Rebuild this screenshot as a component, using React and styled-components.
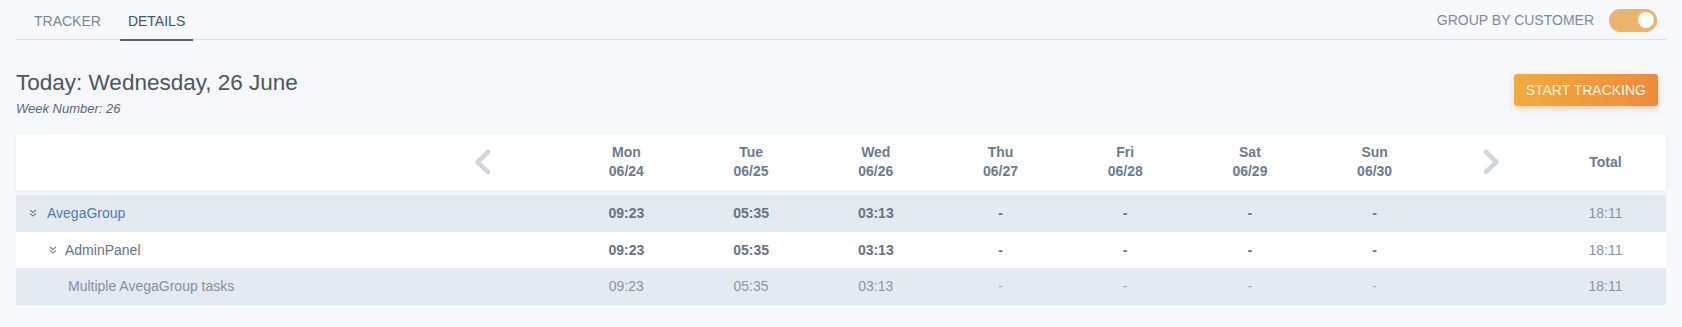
import React from "react";
import styled, { createGlobalStyle } from "styled-components";

const GlobalStyle = createGlobalStyle`
  body {
    margin: 0;
    background: #f6f8fb;
    font-family: "Liberation Sans", Arial, sans-serif;
  }
`;

const Page = styled.div`
  padding: 0 16px;
`;

const TopBar = styled.div`
  box-sizing: border-box;
  height: 40px;
  display: flex;
  justify-content: space-between;
  align-items: center;
  border-bottom: 1px solid #dde1e7;
`;

const Tabs = styled.div`
  display: flex;
  gap: 11px;
  padding-left: 10px;
  align-self: flex-start;
`;

const Tab = styled.div`
  box-sizing: border-box;
  height: 41px;
  padding: 2px 8px 0;
  display: flex;
  align-items: center;
  font-size: 14px;
  color: ${(p) => (p.active ? "#4a5562" : "#7d8896")};
  border-bottom: 2px solid ${(p) => (p.active ? "#55606e" : "transparent")};
`;

const GroupSwitch = styled.div`
  display: flex;
  align-items: center;
  gap: 15px;
  padding-right: 9px;
  font-size: 14px;
  color: #7f8a9b;
`;

const Toggle = styled.div`
  box-sizing: border-box;
  width: 48px;
  height: 23px;
  border-radius: 12px;
  background: #ebb36b;
  display: flex;
  justify-content: flex-end;
  align-items: center;
  padding-right: 3px;
  margin-top: 1px;
`;

const Knob = styled.div`
  width: 16px;
  height: 16px;
  border-radius: 50%;
  background: #fff;
`;

const HeadSection = styled.div`
  display: flex;
  justify-content: space-between;
  align-items: flex-start;
  padding: 30px 8px 18px 0;
`;

const Title = styled.h1`
  margin: 0;
  font-size: 22.5px;
  line-height: 26px;
  font-weight: normal;
  color: #4a5663;
`;

const WeekNumber = styled.div`
  margin-top: 5px;
  font-size: 13px;
  font-style: italic;
  color: #5d6875;
`;

const StartButton = styled.button`
  margin-top: 4px;
  height: 32px;
  padding: 0 12px;
  border: none;
  border-radius: 3px;
  background: linear-gradient(to right, #f4aa3c, #f08a3b);
  box-shadow: 0 3px 6px rgba(240, 140, 60, 0.3);
  color: #fff8ee;
  font-family: inherit;
  font-size: 14px;
`;

const Grid = styled.div`
  display: grid;
  grid-template-columns: 384px 164px repeat(7, 1fr) 108px 121px;
  align-items: center;
`;

const HeaderRow = styled(Grid)`
  height: 56px;
  background: #fff;
  box-shadow: 0 2px 4px rgba(30, 50, 80, 0.05);
  margin-bottom: 5px;
`;

const DayHead = styled.div`
  text-align: center;
  font-size: 14px;
  font-weight: bold;
  line-height: 19px;
  color: #6e7b8c;
`;

const ArrowCell = styled.div`
  display: flex;
  justify-content: center;
`;

const Row = styled(Grid)`
  height: 36.5px;
  background: ${(p) => (p.striped ? "#e4eaf2" : "#fff")};
`;

const NameCell = styled.div`
  grid-column: span 2;
  display: flex;
  align-items: center;
  gap: ${(p) => (p.level === 1 ? 10 : 8)}px;
  padding-left: ${(p) => [13, 33, 52][p.level - 1]}px;
  font-size: 14px;
  color: ${(p) => ["#4c7bbb", "#6a7585", "#8690a0"][p.level - 1]};
`;

const ValueCell = styled.div`
  text-align: center;
  font-size: 14px;
  font-weight: ${(p) => (p.bold ? "bold" : "normal")};
  color: ${(p) => (p.bold ? "#6a7383" : p.empty ? "#a6afbb" : "#8c96a4")};
`;

const TotalCell = styled.div`
  grid-column: 11;
  text-align: center;
  font-size: 14px;
  color: #8a93a2;
`;

const ExpandIcon = () => (
  <svg width="8" height="8" viewBox="0 0 8 8">
    <path
      d="M1 1 L4 3.5 L7 1 M1 4.5 L4 7 L7 4.5"
      fill="none"
      stroke="#7d8896"
      strokeWidth="1.2"
    />
  </svg>
);

const Chevron = ({ right }) => (
  <svg
    width="17"
    height="26"
    viewBox="0 0 17 26"
    style={right ? { transform: "scaleX(-1)" } : undefined}
  >
    <path
      d="M14 3 L3.5 13 L14 23"
      fill="none"
      stroke="#cfd6e0"
      strokeWidth="4.5"
      strokeLinecap="round"
      strokeLinejoin="round"
    />
  </svg>
);

const days = [
  ["Mon", "06/24"],
  ["Tue", "06/25"],
  ["Wed", "06/26"],
  ["Thu", "06/27"],
  ["Fri", "06/28"],
  ["Sat", "06/29"],
  ["Sun", "06/30"],
];

const values = ["09:23", "05:35", "03:13", "-", "-", "-", "-"];

const rows = [
  { name: "AvegaGroup", level: 1, bold: true, striped: true },
  { name: "AdminPanel", level: 2, bold: true, striped: false },
  { name: "Multiple AvegaGroup tasks", level: 3, bold: false, striped: true },
];

const App = () => (
  <React.Fragment>
    <GlobalStyle />
    <Page>
      <TopBar>
        <Tabs>
          <Tab>TRACKER</Tab>
          <Tab active>DETAILS</Tab>
        </Tabs>
        <GroupSwitch>
          GROUP BY CUSTOMER
          <Toggle>
            <Knob />
          </Toggle>
        </GroupSwitch>
      </TopBar>

      <HeadSection>
        <div>
          <Title>Today: Wednesday, 26 June</Title>
          <WeekNumber>Week Number: 26</WeekNumber>
        </div>
        <StartButton>START TRACKING</StartButton>
      </HeadSection>

      <HeaderRow>
        <div />
        <ArrowCell>
          <Chevron />
        </ArrowCell>
        {days.map(([d, date]) => (
          <DayHead key={d}>
            {d}
            <br />
            {date}
          </DayHead>
        ))}
        <ArrowCell>
          <Chevron right />
        </ArrowCell>
        <DayHead>Total</DayHead>
      </HeaderRow>

      {rows.map((r) => (
        <Row key={r.name} striped={r.striped}>
          <NameCell level={r.level}>
            {r.level < 3 && <ExpandIcon />}
            {r.name}
          </NameCell>
          {values.map((v, i) => (
            <ValueCell key={i} bold={r.bold} empty={v === "-"}>
              {v}
            </ValueCell>
          ))}
          <TotalCell>18:11</TotalCell>
        </Row>
      ))}
    </Page>
  </React.Fragment>
);

export default App;
